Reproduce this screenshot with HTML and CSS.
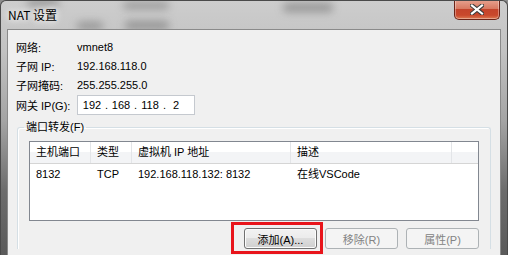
FILE: index.html
```html
<!DOCTYPE html>
<html lang="zh-CN">
<head>
    <meta charset="UTF-8">
    <title>NAT 设置</title>
    <link rel="stylesheet" href="styles.css">
</head>
<body>
    <div class="window">
        <!-- Title bar (aero glass) -->
        <div class="titlebar">
            <div class="glass g1"></div>
            <div class="glass g2"></div>
            <div class="glass g3"></div>
            <div class="glass g4"></div>
            <div class="glass g5"></div>
            <span class="title">NAT 设置</span>
            <div class="close">
                <svg width="14" height="11" viewBox="0 0 14 11">
                    <path d="M2 1.5 L12 9.5 M12 1.5 L2 9.5" stroke="#3a3a3a" stroke-width="4.2" stroke-linecap="square"/>
                    <path d="M2 1.5 L12 9.5 M12 1.5 L2 9.5" stroke="#ffffff" stroke-width="2.2" stroke-linecap="square"/>
                </svg>
            </div>
        </div>

        <!-- Dialog body -->
        <div class="client">
            <div class="info">
                <div class="row"><span class="label">网络:</span><span>vmnet8</span></div>
                <div class="row"><span class="label">子网 IP:</span><span>192.168.118.0</span></div>
                <div class="row"><span class="label">子网掩码:</span><span>255.255.255.0</span></div>
                <div class="row gateway">
                    <span class="label">网关 IP(G):</span>
                    <div class="ip-box">
                        <span class="oct">192</span><span class="dot">.</span>
                        <span class="oct">168</span><span class="dot">.</span>
                        <span class="oct">118</span><span class="dot">.</span>
                        <span class="oct last">2</span>
                    </div>
                </div>
            </div>

            <fieldset class="group">
                <legend>端口转发(F)</legend>
                <div class="list">
                    <div class="list-head">
                        <div class="col c1">主机端口</div>
                        <div class="col c2">类型</div>
                        <div class="col c3">虚拟机 IP 地址</div>
                        <div class="col c4">描述</div>
                        <div class="col c5"></div>
                    </div>
                    <div class="list-row">
                        <div class="col c1">8132</div>
                        <div class="col c2">TCP</div>
                        <div class="col c3">192.168.118.132: 8132</div>
                        <div class="col c4">在线VSCode</div>
                    </div>
                </div>
                <div class="buttons">
                    <button class="btn">添加(A)...</button>
                    <button class="btn" disabled>移除(R)</button>
                    <button class="btn" disabled>属性(P)</button>
                </div>
            </fieldset>

            <!-- annotation box around the add button -->
            <div class="highlight"></div>
        </div>
    </div>
</body>
</html>
```

FILE: styles.css
```css
/* General */
* {
    margin: 0;
    padding: 0;
    box-sizing: border-box;
}
body {
    width: 508px;
    height: 255px;
    overflow: hidden;
    font-family: "Liberation Sans", "Noto Sans CJK SC", sans-serif;
    font-size: 11px;
    color: #000;
    background: #8c8c8c;
}

/* Window frame */
.window {
    height: 100%;
    padding: 0 6px;
    border: 1px solid #4a4a4a;
    border-bottom: none;
    border-radius: 6px 6px 0 0;
    background: linear-gradient(to bottom, #cdcdcd 0, #c2c2c2 50px, #a4a4a4 120px, #6c6c6c 190px, #5a5a5a 255px);
}

/* Title bar */
.titlebar {
    position: relative;
    height: 28px;
    margin: 0 -6px;
    padding-left: 7px;
    overflow: hidden;
}
.title {
    position: relative;
    display: inline-block;
    margin-top: 7px;
    font-family: "Noto Sans CJK SC", sans-serif;
    font-size: 12px;
    line-height: 14px;
    text-shadow: 0 0 6px #fff, 0 0 10px #fff;
}
.glass {
    position: absolute;
    background: #6a6a6a;
    filter: blur(4px);
    opacity: 0.55;
    border-radius: 4px;
}
.g1 { left: 26px; top: -2px; width: 32px; height: 8px; }
.g2 { left: 122px; top: 1px; width: 46px; height: 7px; }
.g3 { left: 76px; top: 21px; width: 26px; height: 8px; }
.g4 { left: 124px; top: 20px; width: 44px; height: 9px; }
.g5 { left: 282px; top: 2px; width: 50px; height: 9px; }
.close {
    position: absolute;
    right: 7px;
    top: -1px;
    width: 46px;
    height: 20px;
    border: 1px solid #6b2418;
    border-top: none;
    border-radius: 0 0 5px 5px;
    background: linear-gradient(to bottom, #e7a290 0, #d87a62 45%, #c4442b 50%, #c9482c 80%, #dc7a52 100%);
    box-shadow: inset 0 0 0 1px rgba(255, 255, 255, 0.35);
    display: flex;
    align-items: center;
    justify-content: center;
}

/* Client area */
.client {
    position: relative;
    height: calc(100% - 28px);
    background: #f0f0f0;
    border: 1px solid #8a8a8a;
    border-bottom: none;
}
.info {
    padding: 7px 0 0 8px;
}
.row {
    display: flex;
    align-items: center;
    height: 19px;
}
.label {
    width: 61px;
}
.row.gateway {
    height: 22px;
}
.ip-box {
    display: flex;
    align-items: center;
    width: 118px;
    height: 20px;
    padding-left: 3px;
    background: #fff;
    border: 1px solid #c5c9cf;
}
.oct {
    width: 22px;
    text-align: center;
}
.oct.last {
    text-align: left;
    padding-left: 5px;
}
.dot {
    width: 7px;
    text-align: center;
}

/* Group box */
.group {
    margin: 4px 9px 0;
    padding: 7px 11px 0;
    border: 1px solid #d5dfe5;
    border-bottom: none;
    border-radius: 3px 3px 0 0;
    box-shadow: inset 1px 1px 0 #fff;
}
.group legend {
    margin-left: -5px;
    padding: 0 2px;
    font-size: 11px;
    line-height: 14px;
}

/* List view */
.list {
    height: 80px;
    background: #fff;
    border: 1px solid #828790;
}
.list-head {
    display: flex;
    height: 22px;
    background: linear-gradient(to bottom, #fff 0, #fff 50%, #f3f4f6 50%, #f3f4f6 100%);
    border-bottom: 1px solid #d5d5d5;
}
.list-head .col {
    border-right: 1px solid #e3e5e8;
    line-height: 21px;
}
.col {
    padding-left: 6px;
    white-space: nowrap;
}
.c1 { width: 61px; }
.c2 { width: 41px; }
.c3 { width: 159px; }
.c4 { width: 161px; }
.list-head .c5 { flex: 1; border-right: none; }
.list-row {
    display: flex;
    height: 19px;
    margin-top: 1px;
    line-height: 19px;
}

/* Buttons */
.buttons {
    display: flex;
    justify-content: flex-end;
    gap: 8px;
    margin-top: 7px;
}
.btn {
    width: 73px;
    height: 21px;
    font-family: inherit;
    font-size: 11px;
    color: #000;
    border: 1px solid #707070;
    border-radius: 3px;
    background: linear-gradient(to bottom, #f2f2f2 0, #ebebeb 50%, #dddddd 50%, #cfcfcf 100%);
    box-shadow: inset 0 0 0 1px #fcfcfc;
}
.btn:disabled {
    color: #838383;
    border-color: #adb2b5;
    background: #f4f4f4;
    box-shadow: none;
}

/* Red annotation */
.highlight {
    position: absolute;
    left: 223px;
    top: 192px;
    width: 92px;
    height: 32px;
    border: 3px solid #e8141b;
}
```
